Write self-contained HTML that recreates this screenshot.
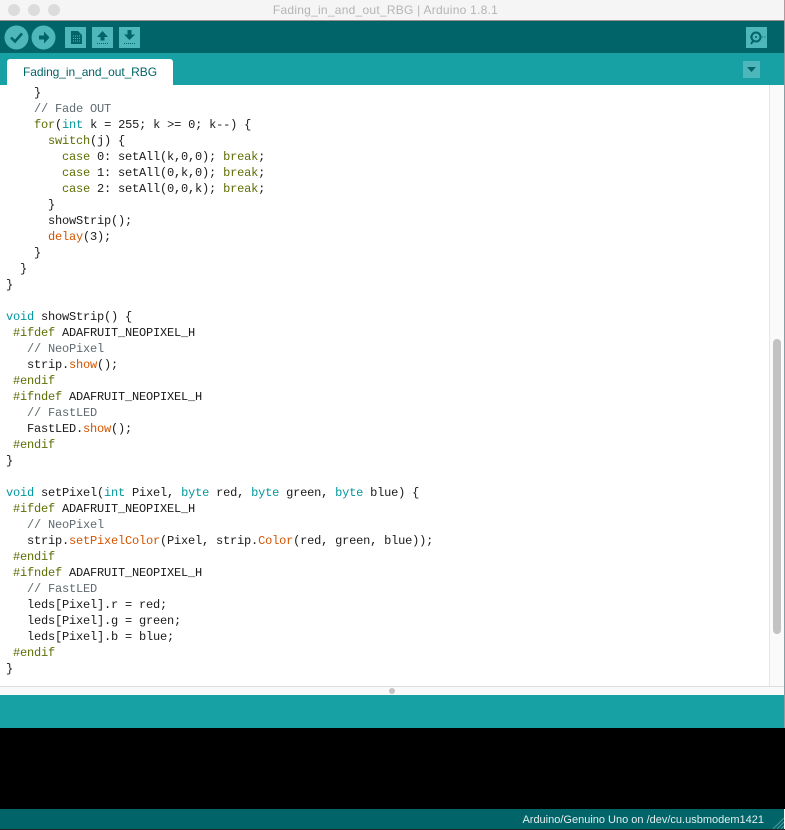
<!DOCTYPE html>
<html>
<head>
<meta charset="utf-8">
<style>
html,body{margin:0;padding:0;background:#fff;}
#w{position:relative;width:785px;height:830px;overflow:hidden;background:#fff;}
.a{position:absolute;}
pre{position:absolute;left:6px;top:85px;margin:0;font:12px/16px "Liberation Mono",monospace;letter-spacing:-.2px;color:#1a1a1a;}
.t{color:#00979c}.k{color:#5e6d03}.f{color:#d35400}.c{color:#5f6a70}
</style>
</head>
<body>
<div id="w">
<!-- title bar -->
<div class="a" style="left:0;top:0;width:785px;height:20px;background:#f5f5f5"></div>
<div class="a" style="left:0;top:20px;width:785px;height:1px;background:#9c8e90"></div>
<div class="a" style="left:8px;top:4px;width:12px;height:12px;border-radius:50%;background:#dcdcdc"></div>
<div class="a" style="left:28px;top:4px;width:12px;height:12px;border-radius:50%;background:#dcdcdc"></div>
<div class="a" style="left:48px;top:4px;width:12px;height:12px;border-radius:50%;background:#dcdcdc"></div>
<div class="a" style="left:0;top:3px;width:771px;text-align:center;font:12px/15px 'Liberation Sans',sans-serif;color:#b4b4b4;letter-spacing:.25px">Fading_in_and_out_RBG | Arduino 1.8.1</div>
<!-- toolbar -->
<div class="a" style="left:0;top:21px;width:784px;height:32px;background:#006468"></div>
<svg class="a" style="left:0;top:21px" width="784" height="32">
<circle cx="16.500" cy="16.500" r="12" fill="#4db7bb"/>
<path d="M11 16.500l4 4 7-8" fill="none" stroke="#006468" stroke-width="2.600"/>
<circle cx="43.500" cy="16.500" r="12" fill="#4db7bb"/>
<path d="M39 14.500h5v-4l5.500 6-5.500 6v-4h-5z" fill="#006468"/>
<rect x="65" y="6" width="21" height="21" fill="#4db7bb"/>
<path d="M71 10h7l4 4v9H71z" fill="#006468"/>
<path d="M73 15h7M73 17.500h7M73 20h7" stroke="#4db7bb" stroke-width="1" stroke-dasharray="1 1"/>
<rect x="92" y="6" width="21" height="21" fill="#4db7bb"/>
<path d="M102.500 10l5.500 6h-3.500v3.500h-4V16H97z" fill="#006468"/>
<path d="M97 22.500h11" stroke="#006468" stroke-width="1" stroke-dasharray="1 1"/>
<rect x="119" y="6" width="21" height="21" fill="#4db7bb"/>
<path d="M129.500 19l5.500-5.500h-3.500V9h-4v4.500H124z" fill="#006468"/>
<path d="M124 22.500h11" stroke="#006468" stroke-width="1" stroke-dasharray="1 1"/>
<rect x="746" y="6" width="21" height="21" fill="#4db7bb"/>
<circle cx="756" cy="16" r="4.500" fill="none" stroke="#006468" stroke-width="2"/>
<circle cx="756" cy="16" r="1" fill="#006468"/>
<path d="M753 20l-2 3" stroke="#006468" stroke-width="2"/>
<path d="M750 16h1M762 16h1M764.500 16h1" stroke="#006468" stroke-width="1"/>
</svg>
<!-- tab bar -->
<div class="a" style="left:0;top:53px;width:784px;height:32px;background:#17a1a5"></div>
<div class="a" style="left:7px;top:59px;width:166px;height:26px;background:#fff;border-radius:3px 3px 0 0;text-align:center;font:12px/26px 'Liberation Sans',sans-serif;color:#006468;letter-spacing:-.07px">Fading_in_and_out_RBG</div>
<svg class="a" style="left:743px;top:61px" width="17" height="17">
<rect width="17" height="17" fill="#4db7bb"/>
<path d="M4 6h9l-4.500 5z" fill="#006468"/>
</svg>
<!-- editor -->
<pre>    }
    <span class="c">// Fade OUT</span>
    <span class="k">for</span>(<span class="t">int</span> k = 255; k &gt;= 0; k--) {
      <span class="k">switch</span>(j) {
        <span class="k">case</span> 0: setAll(k,0,0); <span class="k">break</span>;
        <span class="k">case</span> 1: setAll(0,k,0); <span class="k">break</span>;
        <span class="k">case</span> 2: setAll(0,0,k); <span class="k">break</span>;
      }
      showStrip();
      <span class="f">delay</span>(3);
    }
  }
}

<span class="t">void</span> showStrip() {
 <span class="k">#ifdef</span> ADAFRUIT_NEOPIXEL_H
   <span class="c">// NeoPixel</span>
   strip.<span class="f">show</span>();
 <span class="k">#endif</span>
 <span class="k">#ifndef</span> ADAFRUIT_NEOPIXEL_H
   <span class="c">// FastLED</span>
   FastLED.<span class="f">show</span>();
 <span class="k">#endif</span>
}

<span class="t">void</span> setPixel(<span class="t">int</span> Pixel, <span class="t">byte</span> red, <span class="t">byte</span> green, <span class="t">byte</span> blue) {
 <span class="k">#ifdef</span> ADAFRUIT_NEOPIXEL_H
   <span class="c">// NeoPixel</span>
   strip.<span class="f">setPixelColor</span>(Pixel, strip.<span class="f">Color</span>(red, green, blue));
 <span class="k">#endif</span>
 <span class="k">#ifndef</span> ADAFRUIT_NEOPIXEL_H
   <span class="c">// FastLED</span>
   leds[Pixel].r = red;
   leds[Pixel].g = green;
   leds[Pixel].b = blue;
 <span class="k">#endif</span>
}</pre>
<!-- scrollbar -->
<div class="a" style="left:769px;top:85px;width:15px;height:601px;background:#fafafa;border-left:1px solid #e6e6e6;box-sizing:border-box"></div>
<div class="a" style="left:773px;top:339px;width:8px;height:295px;background:#c2c2c2;border-radius:4px"></div>
<!-- divider -->
<div class="a" style="left:0;top:686px;width:784px;height:1px;background:#dcdcdc"></div>
<div class="a" style="left:0;top:687px;width:784px;height:8px;background:#fafafa"></div>
<div class="a" style="left:389px;top:688px;width:6px;height:6px;border-radius:50%;background:#c4c4c4"></div>
<!-- console -->
<div class="a" style="left:0;top:695px;width:784px;height:33px;background:#17a1a5"></div>
<div class="a" style="left:0;top:728px;width:785px;height:81px;background:#000"></div>
<div class="a" style="left:0;top:809px;width:784px;height:20px;background:#006468"></div>
<div class="a" style="left:0;top:829px;width:785px;height:1px;background:#222"></div>
<div class="a" style="right:21px;top:813px;font:11px/15px 'Liberation Sans',sans-serif;color:#e2eeee;white-space:nowrap">Arduino/Genuino Uno on /dev/cu.usbmodem1421</div>
<svg class="a" style="left:772px;top:817px" width="12" height="12"><path d="M1 12L12 1M5 12l7-7M9 12l3-3" stroke="#4d9a9d" stroke-width="1"/></svg>
<!-- right edge -->
<div class="a" style="left:784px;top:0;width:1px;height:21px;background:#b39aa0"></div>
<div class="a" style="left:784px;top:21px;width:1px;height:707px;background:#8a9fa5"></div>
</div>
</body>
</html>
